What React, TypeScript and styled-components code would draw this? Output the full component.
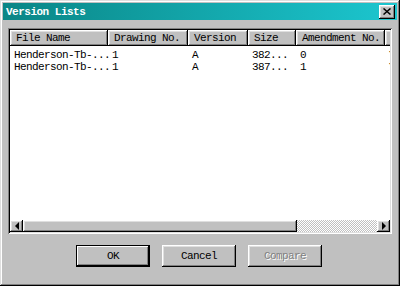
import React from 'react';
import styled, { createGlobalStyle } from 'styled-components';

const GlobalStyle = createGlobalStyle`
  html, body {
    margin: 0;
    padding: 0;
    background: #c0c0c0;
  }
  * {
    box-sizing: border-box;
  }
`;

const raised = `
  box-shadow: inset -1px -1px #000, inset 1px 1px #fff, inset -2px -2px #808080, inset 2px 2px #dfdfdf;
`;

const Window = styled.div`
  width: 400px;
  height: 286px;
  padding: 3px;
  display: flex;
  flex-direction: column;
  background: #c0c0c0;
  font-family: "Liberation Mono", "DejaVu Sans Mono", monospace;
  font-size: 11px;
  letter-spacing: -0.6px;
  color: #000;
  box-shadow: inset -1px -1px #000, inset 1px 1px #dfdfdf, inset -2px -2px #808080, inset 2px 2px #fff;
`;

const TitleBar = styled.div`
  height: 17px;
  display: flex;
  align-items: center;
  justify-content: space-between;
  padding: 0 2px 0 3px;
  background: linear-gradient(to right, #0a8686, #1cc6cf);
`;

const Title = styled.span`
  color: #fff;
  font-weight: bold;
  font-size: 11px;
  letter-spacing: -0.5px;
`;

const CloseButton = styled.div`
  width: 16px;
  height: 14px;
  display: flex;
  align-items: center;
  justify-content: center;
  background: #c0c0c0;
  ${raised}
`;

const Body = styled.div`
  flex: 1;
  display: flex;
  flex-direction: column;
  padding: 8px 5px 16px 5px;
`;

const ListView = styled.div`
  height: 206px;
  padding: 2px;
  display: flex;
  flex-direction: column;
  background: #fff;
  box-shadow: inset 1px 1px #808080, inset -1px -1px #fff, inset 2px 2px #000, inset -2px -2px #dfdfdf;
`;

const ListArea = styled.div`
  flex: 1;
  overflow: hidden;
`;

const HeaderRow = styled.div`
  display: flex;
  height: 16px;
  width: 420px;
`;

const HeaderCell = styled.div<{ $w: number }>`
  width: ${p => p.$w}px;
  flex-shrink: 0;
  padding: 0 0 0 6px;
  display: flex;
  align-items: center;
  background: #c0c0c0;
  white-space: nowrap;
  overflow: hidden;
  ${raised}
`;

const Rows = styled.div`
  padding-top: 3px;
`;

const Row = styled.div`
  display: flex;
  height: 12px;
  align-items: center;
  width: 420px;
`;

const Cell = styled.div<{ $w: number }>`
  width: ${p => p.$w}px;
  flex-shrink: 0;
  padding-left: 4px;
  white-space: nowrap;
`;

const ScrollBar = styled.div`
  height: 12px;
  display: flex;
  background-color: #fff;
  background-image: repeating-conic-gradient(#c0c0c0 0 25%, #fff 0 50%);
  background-size: 2px 2px;
`;

const ArrowButton = styled.div`
  width: 13px;
  height: 12px;
  display: flex;
  align-items: center;
  justify-content: center;
  background: #c0c0c0;
  ${raised}
`;

const Arrow = styled.div<{ $dir: 'left' | 'right' }>`
  width: 0;
  height: 0;
  border-top: 4px solid transparent;
  border-bottom: 4px solid transparent;
  ${p => p.$dir === 'left' ? 'border-right: 4px solid #000;' : 'border-left: 4px solid #000;'}
`;

const Thumb = styled.div`
  width: 274px;
  height: 12px;
  background: #c0c0c0;
  ${raised}
`;

const Track = styled.div`
  flex: 1;
`;

const ButtonRow = styled.div`
  display: flex;
  gap: 12px;
  padding: 11px 0 0 68px;
`;

const Button = styled.div<{ $default?: boolean; $disabled?: boolean }>`
  width: 74px;
  height: 22px;
  display: flex;
  align-items: center;
  justify-content: center;
  background: #c0c0c0;
  color: ${p => p.$disabled ? '#808080' : '#000'};
  text-shadow: ${p => p.$disabled ? '1px 1px #fff' : 'none'};
  box-shadow: ${p => p.$default
    ? 'inset 0 0 0 1px #000, inset -2px -2px #000, inset 2px 2px #fff, inset -3px -3px #808080'
    : 'inset -1px -1px #000, inset 1px 1px #fff, inset -2px -2px #808080, inset 2px 2px #dfdfdf'};
`;

const columns = [
  { name: 'File Name', w: 98 },
  { name: 'Drawing No.', w: 80 },
  { name: 'Version', w: 60 },
  { name: 'Size', w: 48 },
  { name: 'Amendment No.', w: 89 },
  { name: '', w: 45 },
];

const rows = [
  ['Henderson-Tb-...', '1', 'A', '382...', '0', 'Y'],
  ['Henderson-Tb-...', '1', 'A', '387...', '1', 'Y'],
];

export default function App() {
  return (
    <>
      <GlobalStyle />
      <Window>
        <TitleBar>
          <Title>Version Lists</Title>
          <CloseButton>
            <svg width="8" height="7" viewBox="0 0 8 7">
              <path d="M0.5 0.5 L7.5 6.5 M7.5 0.5 L0.5 6.5" stroke="#000" strokeWidth="1.5" />
            </svg>
          </CloseButton>
        </TitleBar>
        <Body>
          <ListView>
            <ListArea>
              <HeaderRow>
                {columns.map((c, i) => (
                  <HeaderCell key={i} $w={c.w}>{c.name}</HeaderCell>
                ))}
              </HeaderRow>
              <Rows>
                {rows.map((r, i) => (
                  <Row key={i}>
                    {r.map((v, j) => (
                      <Cell key={j} $w={columns[j].w}>{v}</Cell>
                    ))}
                  </Row>
                ))}
              </Rows>
            </ListArea>
            <ScrollBar>
              <ArrowButton><Arrow $dir="left" /></ArrowButton>
              <Thumb />
              <Track />
              <ArrowButton><Arrow $dir="right" /></ArrowButton>
            </ScrollBar>
          </ListView>
          <ButtonRow>
            <Button $default>OK</Button>
            <Button>Cancel</Button>
            <Button $disabled>Compare</Button>
          </ButtonRow>
        </Body>
      </Window>
    </>
  );
}
